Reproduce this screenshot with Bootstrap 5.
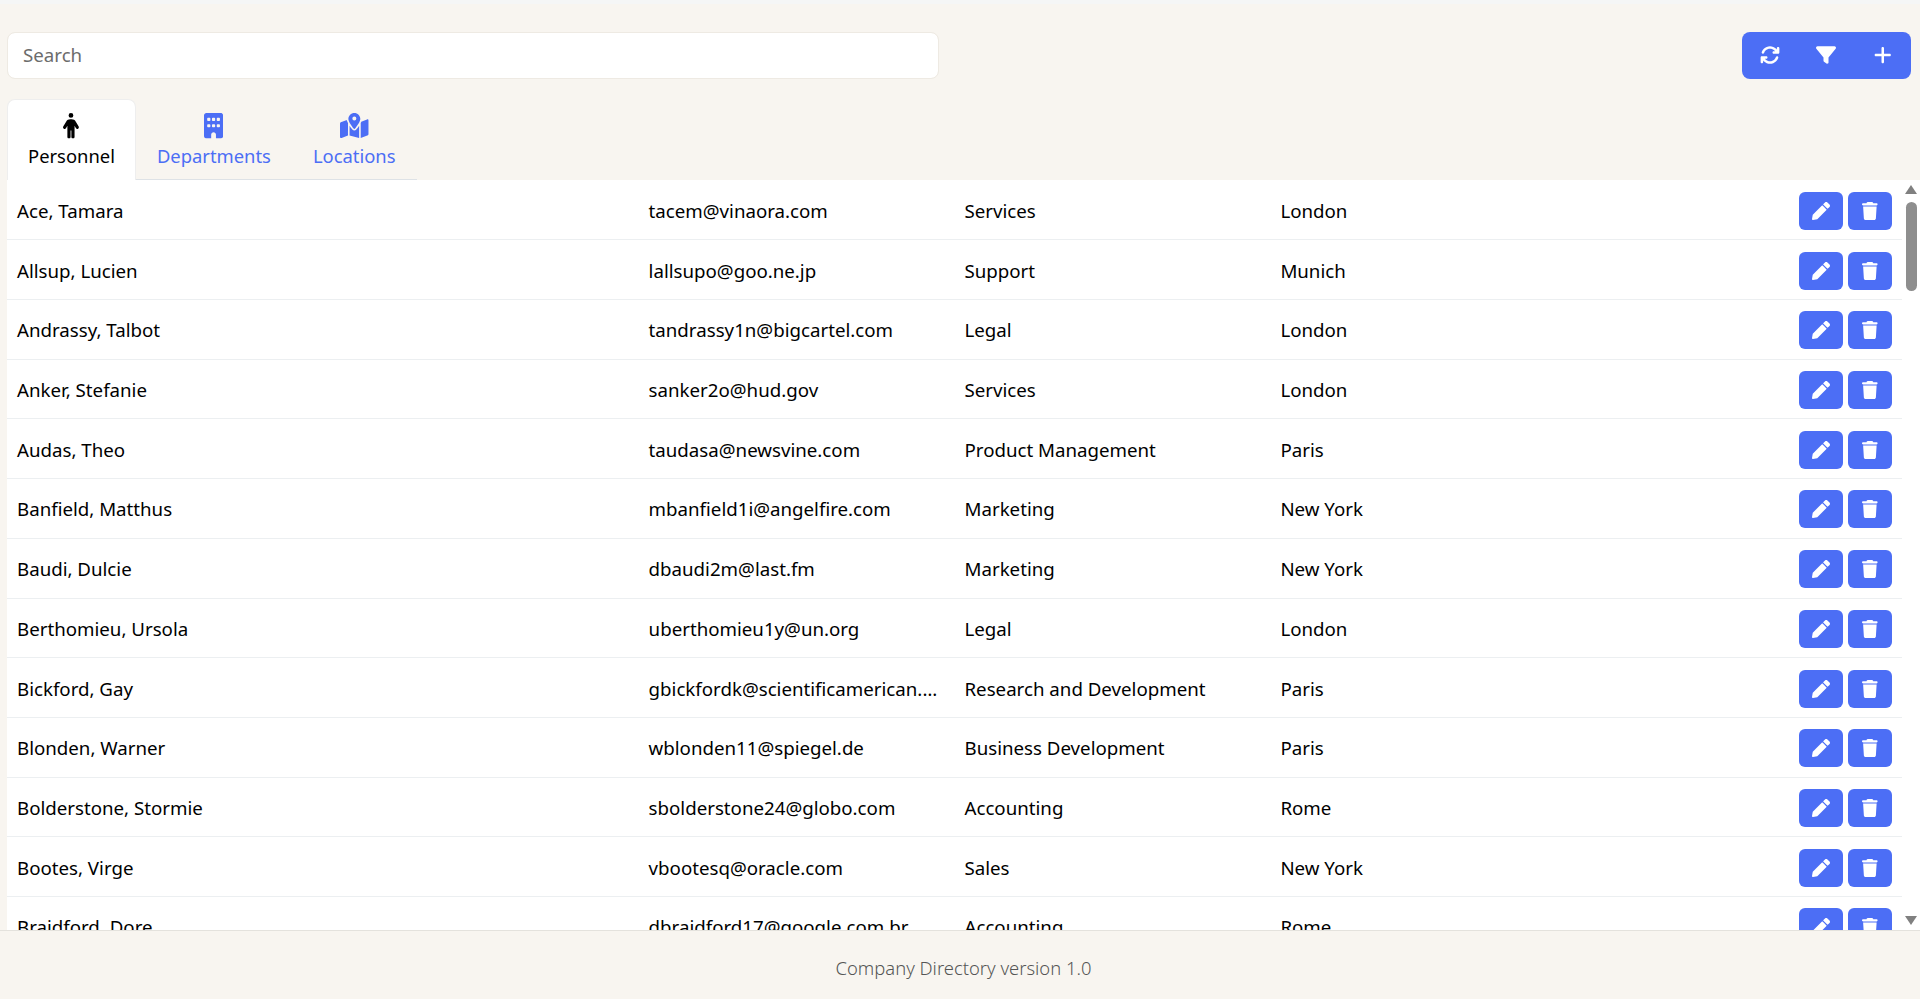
<!DOCTYPE html>
<html lang="en">
<head>
<meta charset="utf-8">
<title>Company Directory</title>
<link href="https://cdn.jsdelivr.net/npm/bootstrap@5.3.0/dist/css/bootstrap.min.css" rel="stylesheet">
<style>
html,body{height:100%}
body{background:#f8f5f0;font-family:"Noto Sans","Open Sans","Liberation Sans",sans-serif;font-size:18.7px;color:#000;overflow:hidden;border-top:4px solid #f5f6f6}
.shell{height:100%}
.topbar{padding:27.5px 9px 0 7px}
.searchbox{width:932px;height:47px;font-size:18.7px;padding:0 15px 2px;border:1px solid #eeeae3;border-radius:8px;color:#000}
.searchbox::placeholder{color:#6c6c6c}
.toolgroup{background:#4c6ef5;border-radius:8px;height:47px;width:169px}
.toolbtn{flex:1;border:0;background:none;color:#fff;padding:0 0 1px;display:flex;align-items:center;justify-content:center;height:100%}
.toolbtn svg{height:20px;fill:currentColor}
.tabrow{margin:20.5px 0 0 7px;width:410px;border-bottom:1px solid #dee2e6;flex-wrap:nowrap}
.tabrow .nav-link{padding:13px 20px 0;height:82px;font-size:18.4px;line-height:27px;color:#4c6ef5;border-radius:8px 8px 0 0;border:1px solid transparent;display:flex;flex-direction:column;align-items:center;gap:3.5px}
.tabrow .nav-link svg{height:25.5px;display:block;fill:currentColor}
.tabrow .nav-link.active{background:#fff;color:#000;border-color:#eeeeee #eeeeee #fff}
.tabrow .nav-item{margin-bottom:-1px}
.listzone{flex:1;min-height:0;margin-left:7px;background:#fff}
.listwrap{flex:1;min-width:0;overflow:hidden}
.railbar{width:18px;flex:none;display:flex;flex-direction:column;align-items:center;padding:5px 0;background:#fff}
.railbar svg{width:12px;height:9px;flex:none;fill:#808080}
.railthumb{width:11px;height:89px;margin-top:8px;background:#8e8e8e;border-radius:6px}
.peopletable{table-layout:fixed;width:100%;margin:0;font-size:18.7px;color:#000}
.peopletable td{height:59.73px;padding:2px 10px 0;vertical-align:middle;border-bottom:1px solid #eceff1;white-space:nowrap;overflow:hidden;text-overflow:ellipsis}
.peopletable td.actcell{padding-top:2px}
.actrow{gap:5px}
.rowbtn{width:44px;height:38px;padding:0;background:#4c6ef5;border:0;border-radius:6px;color:#fff;display:inline-flex;align-items:center;justify-content:center}
.rowbtn svg{height:18px;fill:currentColor}
.pagefoot{height:69px;flex:none;border-top:1px solid #e4e2dd;color:#555;font-weight:300;font-size:18.4px;display:flex;align-items:center;justify-content:center;padding:6px 0 0 7px}
</style>
</head>
<body>
<svg width="0" height="0" class="position-absolute">
<symbol id="i-person" viewBox="0 0 320 512"><path d="M112 48a48 48 0 1 1 96 0 48 48 0 1 1-96 0zm40 304V480c0 17.7-14.3 32-32 32s-32-14.3-32-32V256.9L59.4 304.5c-9.1 15.1-28.8 20-43.9 10.9s-20-28.8-10.9-43.9l58.3-97c17.4-28.9 48.6-46.6 82.3-46.6h29.7c33.7 0 64.9 17.7 82.3 46.6l58.3 97c9.1 15.1 4.2 34.8-10.9 43.9s-34.8 4.2-43.9-10.9L232 256.9V480c0 17.7-14.3 32-32 32s-32-14.3-32-32V352H152z"/></symbol>
<symbol id="i-building" viewBox="0 0 384 512"><path d="M48 0C21.5 0 0 21.5 0 48V464c0 26.5 21.5 48 48 48h96V432c0-26.5 21.5-48 48-48s48 21.5 48 48v80h96c26.5 0 48-21.5 48-48V48c0-26.5-21.5-48-48-48H48zM64 240c0-8.8 7.2-16 16-16h32c8.8 0 16 7.2 16 16v32c0 8.8-7.2 16-16 16H80c-8.8 0-16-7.2-16-16V240zm112-16h32c8.8 0 16 7.2 16 16v32c0 8.8-7.2 16-16 16H176c-8.8 0-16-7.2-16-16V240c0-8.8 7.2-16 16-16zm80 16c0-8.8 7.2-16 16-16h32c8.8 0 16 7.2 16 16v32c0 8.8-7.2 16-16 16H272c-8.8 0-16-7.2-16-16V240zM80 96h32c8.8 0 16 7.2 16 16v32c0 8.8-7.2 16-16 16H80c-8.8 0-16-7.2-16-16V112c0-8.8 7.2-16 16-16zm80 16c0-8.8 7.2-16 16-16h32c8.8 0 16 7.2 16 16v32c0 8.8-7.2 16-16 16H176c-8.8 0-16-7.2-16-16V112zM272 96h32c8.8 0 16 7.2 16 16v32c0 8.8-7.2 16-16 16H272c-8.8 0-16-7.2-16-16V112c0-8.8 7.2-16 16-16z"/></symbol>
<symbol id="i-map" viewBox="0 0 576 512"><path d="M408 120c0 54.6-73.1 151.9-105.2 192c-7.7 9.6-22 9.6-29.6 0C241.1 271.9 168 174.6 168 120C168 53.7 221.7 0 288 0s120 53.7 120 120zm8 80.4c3.5-6.9 6.7-13.8 9.6-20.6c.5-1.2 1-2.5 1.5-3.7l116-46.4C558.9 123.4 576 135 576 152V422.8c0 9.8-6 18.6-15.1 22.3L416 503V200.4zM137.6 138.3c2.4 14.1 7.2 28.3 12.8 41.5c2.9 6.8 6.1 13.7 9.6 20.6V451.8L32.9 502.7C17.1 509 0 497.4 0 480.4V209.6c0-9.8 6-18.6 15.1-22.3l122.6-49zM327.8 332c13.9-17.4 35.7-45.7 56.2-77V504.3L192 449.4V255c20.5 31.3 42.3 59.6 56.2 77c20.5 25.6 59.1 25.6 79.6 0zM288 152a40 40 0 1 0 0-80 40 40 0 1 0 0 80z"/></symbol>
<symbol id="i-sync" viewBox="0 0 512 512"><path d="M105.1 202.6c7.7-21.8 20.2-42.3 37.8-59.8c62.5-62.5 163.8-62.5 226.3 0L386.3 160H352c-17.7 0-32 14.3-32 32s14.3 32 32 32H463.5c0 0 0 0 0 0h.4c17.7 0 32-14.3 32-32V80c0-17.7-14.3-32-32-32s-32 14.3-32 32v35.2L414.4 97.6c-87.5-87.5-229.3-87.5-316.8 0C73.2 122 55.6 150.7 44.8 181.4c-5.9 16.7 2.9 34.9 19.5 40.8s34.9-2.9 40.8-19.5zM39 289.3c-5 1.5-9.8 4.2-13.7 8.2c-4 4-6.7 8.8-8.1 14c-.3 1.2-.6 2.5-.8 3.8c-.3 1.7-.4 3.4-.4 5.1V432c0 17.7 14.3 32 32 32s32-14.3 32-32V396.9l17.6 17.5 0 0c87.5 87.4 229.3 87.4 316.7 0c24.4-24.4 42.1-53.1 52.9-83.7c5.9-16.7-2.9-34.9-19.5-40.8s-34.9 2.9-40.8 19.5c-7.7 21.8-20.2 42.3-37.8 59.8c-62.5 62.5-163.8 62.5-226.3 0l-.1-.1L125.6 352H160c17.7 0 32-14.3 32-32s-14.3-32-32-32H48.4c-1.6 0-3.2 .1-4.8 .3s-3.1 .5-4.6 1z"/></symbol>
<symbol id="i-filter" viewBox="0 0 512 512"><path d="M3.9 54.9C10.5 40.9 24.5 32 40 32H472c15.5 0 29.5 8.9 36.1 22.9s4.6 30.5-5.2 42.5L320 320.9V448c0 12.1-6.8 23.2-17.7 28.6s-23.8 4.3-33.5-3l-64-48c-8.1-6-12.8-15.5-12.8-25.6V320.9L9 97.3C-.7 85.4-2.8 68.8 3.9 54.9z"/></symbol>
<symbol id="i-plus" viewBox="0 0 448 512"><path d="M256 80c0-17.7-14.3-32-32-32s-32 14.3-32 32V224H48c-17.7 0-32 14.3-32 32s14.3 32 32 32H192V432c0 17.7 14.3 32 32 32s32-14.3 32-32V288H400c17.7 0 32-14.3 32-32s-14.3-32-32-32H256V80z"/></symbol>
<symbol id="i-pen" viewBox="0 0 512 512"><path d="M497.9 142.1l-46.1 46.1c-4.7 4.7-12.3 4.7-17 0l-111-111c-4.7-4.7-4.7-12.3 0-17l46.1-46.1c18.7-18.7 49.1-18.7 67.9 0l60.1 60.1c18.8 18.7 18.8 49.1 0 67.9zM284.2 99.8L21.6 362.4.4 483.9c-2.9 16.4 11.4 30.6 27.8 27.8l121.5-21.3 262.6-262.6c4.7-4.7 4.7-12.3 0-17l-111-111c-4.8-4.7-12.4-4.7-17.1 0z"/></symbol>
<symbol id="i-trash" viewBox="0 0 448 512"><path d="M135.2 17.7L128 32H32C14.3 32 0 46.3 0 64S14.3 96 32 96H416c17.7 0 32-14.3 32-32s-14.3-32-32-32H320l-7.2-14.3C307.4 6.8 296.3 0 284.2 0H163.8c-12.1 0-23.2 6.8-28.6 17.7zM416 128H32L53.2 467c1.6 25.3 22.6 45 47.9 45H346.9c25.3 0 46.3-19.7 47.9-45L416 128z"/></symbol>
</svg>
<div class="shell d-flex flex-column">
  <div class="topbar d-flex justify-content-between align-items-start">
    <input class="form-control searchbox" type="search" placeholder="Search" aria-label="Search">
    <div class="toolgroup d-flex" role="group" aria-label="Tools">
      <button class="toolbtn" aria-label="Refresh"><svg viewBox="0 0 512 512"><use href="#i-sync"/></svg></button>
      <button class="toolbtn" aria-label="Filter"><svg viewBox="0 0 512 512"><use href="#i-filter"/></svg></button>
      <button class="toolbtn" aria-label="Add"><svg viewBox="0 0 448 512"><use href="#i-plus"/></svg></button>
    </div>
  </div>
  <ul class="nav nav-tabs tabrow">
    <li class="nav-item"><a class="nav-link active" href="#"><svg viewBox="0 0 320 512"><use href="#i-person"/></svg>Personnel</a></li>
    <li class="nav-item"><a class="nav-link" href="#"><svg viewBox="0 0 384 512"><use href="#i-building"/></svg>Departments</a></li>
    <li class="nav-item"><a class="nav-link" href="#"><svg viewBox="0 0 576 512"><use href="#i-map"/></svg>Locations</a></li>
  </ul>
  <div class="listzone d-flex">
    <div class="listwrap">
    <table class="table peopletable">
      <colgroup><col style="width:33.33%"><col style="width:16.67%"><col style="width:16.67%"><col style="width:16.67%"><col style="width:16.66%"></colgroup>
      <tbody>
<tr><td>Ace, Tamara</td><td>tacem@vinaora.com</td><td>Services</td><td>London</td><td class="actcell"><div class="actrow d-flex justify-content-end"><button class="rowbtn" aria-label="Edit"><svg viewBox="0 0 512 512"><use href="#i-pen"/></svg></button><button class="rowbtn" aria-label="Delete"><svg viewBox="0 0 448 512"><use href="#i-trash"/></svg></button></div></td></tr>
<tr><td>Allsup, Lucien</td><td>lallsupo@goo.ne.jp</td><td>Support</td><td>Munich</td><td class="actcell"><div class="actrow d-flex justify-content-end"><button class="rowbtn" aria-label="Edit"><svg viewBox="0 0 512 512"><use href="#i-pen"/></svg></button><button class="rowbtn" aria-label="Delete"><svg viewBox="0 0 448 512"><use href="#i-trash"/></svg></button></div></td></tr>
<tr><td>Andrassy, Talbot</td><td>tandrassy1n@bigcartel.com</td><td>Legal</td><td>London</td><td class="actcell"><div class="actrow d-flex justify-content-end"><button class="rowbtn" aria-label="Edit"><svg viewBox="0 0 512 512"><use href="#i-pen"/></svg></button><button class="rowbtn" aria-label="Delete"><svg viewBox="0 0 448 512"><use href="#i-trash"/></svg></button></div></td></tr>
<tr><td>Anker, Stefanie</td><td>sanker2o@hud.gov</td><td>Services</td><td>London</td><td class="actcell"><div class="actrow d-flex justify-content-end"><button class="rowbtn" aria-label="Edit"><svg viewBox="0 0 512 512"><use href="#i-pen"/></svg></button><button class="rowbtn" aria-label="Delete"><svg viewBox="0 0 448 512"><use href="#i-trash"/></svg></button></div></td></tr>
<tr><td>Audas, Theo</td><td>taudasa@newsvine.com</td><td>Product Management</td><td>Paris</td><td class="actcell"><div class="actrow d-flex justify-content-end"><button class="rowbtn" aria-label="Edit"><svg viewBox="0 0 512 512"><use href="#i-pen"/></svg></button><button class="rowbtn" aria-label="Delete"><svg viewBox="0 0 448 512"><use href="#i-trash"/></svg></button></div></td></tr>
<tr><td>Banfield, Matthus</td><td>mbanfield1i@angelfire.com</td><td>Marketing</td><td>New York</td><td class="actcell"><div class="actrow d-flex justify-content-end"><button class="rowbtn" aria-label="Edit"><svg viewBox="0 0 512 512"><use href="#i-pen"/></svg></button><button class="rowbtn" aria-label="Delete"><svg viewBox="0 0 448 512"><use href="#i-trash"/></svg></button></div></td></tr>
<tr><td>Baudi, Dulcie</td><td>dbaudi2m@last.fm</td><td>Marketing</td><td>New York</td><td class="actcell"><div class="actrow d-flex justify-content-end"><button class="rowbtn" aria-label="Edit"><svg viewBox="0 0 512 512"><use href="#i-pen"/></svg></button><button class="rowbtn" aria-label="Delete"><svg viewBox="0 0 448 512"><use href="#i-trash"/></svg></button></div></td></tr>
<tr><td>Berthomieu, Ursola</td><td>uberthomieu1y@un.org</td><td>Legal</td><td>London</td><td class="actcell"><div class="actrow d-flex justify-content-end"><button class="rowbtn" aria-label="Edit"><svg viewBox="0 0 512 512"><use href="#i-pen"/></svg></button><button class="rowbtn" aria-label="Delete"><svg viewBox="0 0 448 512"><use href="#i-trash"/></svg></button></div></td></tr>
<tr><td>Bickford, Gay</td><td>gbickfordk@scientificamerican.com</td><td>Research and Development</td><td>Paris</td><td class="actcell"><div class="actrow d-flex justify-content-end"><button class="rowbtn" aria-label="Edit"><svg viewBox="0 0 512 512"><use href="#i-pen"/></svg></button><button class="rowbtn" aria-label="Delete"><svg viewBox="0 0 448 512"><use href="#i-trash"/></svg></button></div></td></tr>
<tr><td>Blonden, Warner</td><td>wblonden11@spiegel.de</td><td>Business Development</td><td>Paris</td><td class="actcell"><div class="actrow d-flex justify-content-end"><button class="rowbtn" aria-label="Edit"><svg viewBox="0 0 512 512"><use href="#i-pen"/></svg></button><button class="rowbtn" aria-label="Delete"><svg viewBox="0 0 448 512"><use href="#i-trash"/></svg></button></div></td></tr>
<tr><td>Bolderstone, Stormie</td><td>sbolderstone24@globo.com</td><td>Accounting</td><td>Rome</td><td class="actcell"><div class="actrow d-flex justify-content-end"><button class="rowbtn" aria-label="Edit"><svg viewBox="0 0 512 512"><use href="#i-pen"/></svg></button><button class="rowbtn" aria-label="Delete"><svg viewBox="0 0 448 512"><use href="#i-trash"/></svg></button></div></td></tr>
<tr><td>Bootes, Virge</td><td>vbootesq@oracle.com</td><td>Sales</td><td>New York</td><td class="actcell"><div class="actrow d-flex justify-content-end"><button class="rowbtn" aria-label="Edit"><svg viewBox="0 0 512 512"><use href="#i-pen"/></svg></button><button class="rowbtn" aria-label="Delete"><svg viewBox="0 0 448 512"><use href="#i-trash"/></svg></button></div></td></tr>
<tr><td>Braidford, Dore</td><td>dbraidford17@google.com.br</td><td>Accounting</td><td>Rome</td><td class="actcell"><div class="actrow d-flex justify-content-end"><button class="rowbtn" aria-label="Edit"><svg viewBox="0 0 512 512"><use href="#i-pen"/></svg></button><button class="rowbtn" aria-label="Delete"><svg viewBox="0 0 448 512"><use href="#i-trash"/></svg></button></div></td></tr>
      </tbody>
    </table>
    </div>
    <div class="railbar" aria-hidden="true">
      <svg viewBox="0 0 12 9"><path d="M6 0 12 9H0z"/></svg>
      <div class="railthumb"></div>
      <svg class="mt-auto" viewBox="0 0 12 9"><path d="M6 9 0 0H12z"/></svg>
    </div>
  </div>
  <footer class="pagefoot">Company Directory version 1.0</footer>
</div>
<script src="https://cdn.jsdelivr.net/npm/bootstrap@5.3.0/dist/js/bootstrap.bundle.min.js"></script>
</body>
</html>
